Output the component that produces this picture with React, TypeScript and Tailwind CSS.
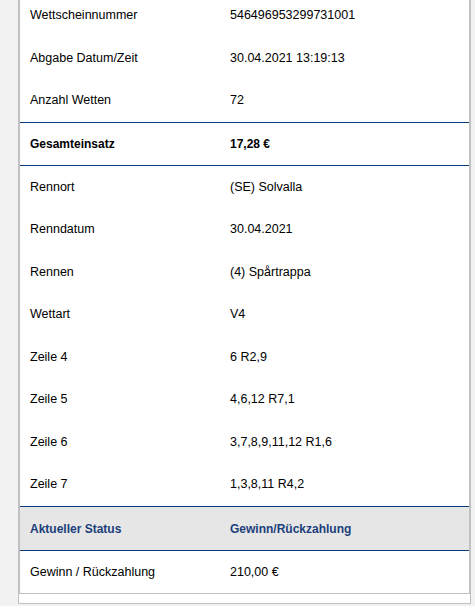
const topRows = [
  { label: 'Wettscheinnummer', value: '546496953299731001', h: 'h-[43px]' },
  { label: 'Abgabe Datum/Zeit', value: '30.04.2021 13:19:13', h: 'h-[42px]' },
  { label: 'Anzahl Wetten', value: '72', h: 'h-[43px]' },
];

const detailRows = [
  { label: 'Rennort', value: '(SE) Solvalla', h: 'h-[42px]' },
  { label: 'Renndatum', value: '30.04.2021', h: 'h-[43px]' },
  { label: 'Rennen', value: '(4) Spårtrappa', h: 'h-[42px]' },
  { label: 'Wettart', value: 'V4', h: 'h-[43px]' },
  { label: 'Zeile 4', value: '6 R2,9', h: 'h-[42px]' },
  { label: 'Zeile 5', value: '4,6,12 R7,1', h: 'h-[43px]' },
  { label: 'Zeile 6', value: '3,7,8,9,11,12 R1,6', h: 'h-[42px]' },
  { label: 'Zeile 7', value: '1,3,8,11 R4,2', h: 'h-[43px]' },
];

function Row({ label, value, h, className = '' }: { label: string; value: string; h: string; className?: string }) {
  return (
    <div className={`flex items-center ${h} ${className}`}>
      <div className="w-[210px] pl-[10px]">{label}</div>
      <div>{value}</div>
    </div>
  );
}

export default function App() {
  return (
    <div className="min-h-[613px] bg-[#f2f2f2] pl-[18px] pr-[4px] font-['Liberation_Sans',Arial,sans-serif] text-[12.5px] text-black">
      <div className="mt-[-7px] w-[453px] border border-[#c0c0c0] bg-white pb-[9px]">
        <div className="border border-t-0 border-[#c0c0c0]">
          {topRows.map((r) => (
            <Row key={r.label} {...r} />
          ))}
          <Row
            label="Gesamteinsatz"
            value="17,28 €"
            h="h-[44px]"
            className="border-y border-[#0d3b7a] text-[12px] font-bold"
          />
          {detailRows.map((r) => (
            <Row key={r.label} {...r} />
          ))}
          <Row
            label="Aktueller Status"
            value="Gewinn/Rückzahlung"
            h="h-[45px]"
            className="border-y border-[#0d3b7a] bg-[#e6e6e6] text-[12px] font-bold text-[#1c3f7a]"
          />
          <Row label="Gewinn / Rückzahlung" value="210,00 €" h="h-[42px]" />
        </div>
      </div>
    </div>
  );
}
